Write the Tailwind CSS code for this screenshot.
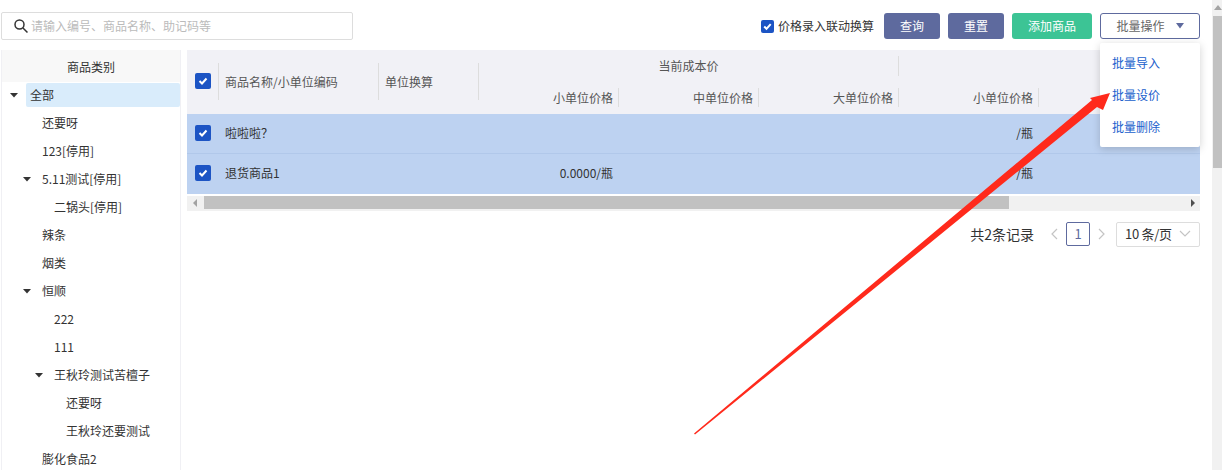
<!DOCTYPE html>
<html lang="zh">
<head>
<meta charset="UTF-8">
<title>批量操作</title>
<script src="https://cdn.jsdelivr.net/npm/@tailwindcss/browser@4"></script>
</head>
<body class="relative w-[1222px] h-[470px] overflow-hidden bg-white text-[12px] text-[#333] font-['Noto_Sans_CJK_SC','Noto_Sans',sans-serif]">
<div class="flex h-full">
  <div class="w-[1212px] h-full">
    <!-- toolbar -->
    <div class="flex items-start h-[50px] pt-[12px] pl-[1px] pr-[12px]">
      <div class="flex items-center w-[352px] h-[28px] border border-[#ddd] rounded-[2px] pl-[11px]">
        <svg width="16" height="16" viewBox="0 0 16 16" fill="none" stroke="#333" stroke-width="1.5"><circle cx="6.5" cy="6.5" r="4.5"/><path d="M10 10l4.5 4.5"/></svg>
        <span class="ml-[2px] text-[#bbb]">请输入编号、商品名称、助记码等</span>
      </div>
      <div class="ml-auto mt-[1px] flex items-center">
        <span class="flex items-center justify-center w-[13px] h-[13px] bg-[#1c54c4] rounded-[2px]">
          <svg width="11" height="11" viewBox="0 0 11 11" fill="none" stroke="#fff" stroke-width="2"><path d="M2.2 5.5l2.3 2.3 4.2-4.6"/></svg>
        </span>
        <span class="ml-[4px] w-[96px] whitespace-nowrap">价格录入联动换算</span>
        <button class="ml-[10px] w-[56px] h-[26px] rounded-[3px] bg-[#5e6a9e] text-white">查询</button>
        <button class="ml-[8px] w-[56px] h-[26px] rounded-[3px] bg-[#5e6a9e] text-white">重置</button>
        <button class="ml-[8px] w-[80px] h-[26px] rounded-[3px] bg-[#3cc495] text-white">添加商品</button>
        <button class="ml-[8px] flex items-center justify-center w-[100px] h-[26px] rounded-[3px] border border-[#5e6a9e] text-[#666] bg-white">
          批量操作
          <svg class="ml-[11px]" width="8" height="6" viewBox="0 0 8 6"><path d="M0 0h8L4 5.5z" fill="#5e6a9e"/></svg>
        </button>
      </div>
    </div>
    <div class="flex h-[420px] pl-[1px] pr-[12px]">
      <!-- category tree -->
      <div class="w-[180px] shrink-0 border-x border-[#f0f0f4]">
        <div class="flex items-center justify-center h-[32px] pt-[2px] bg-[#f8f8f8]">商品类别</div>
        <div class="pt-[1px]">
          <div class="flex items-center h-[24px] mb-[2px] pl-[8px]">
            <svg class="mr-[8px]" width="8" height="5" viewBox="0 0 8 5"><path d="M0 0h8L4 4.5z" fill="#333"/></svg>
            <span class="flex-1 flex items-center h-full pl-[4px] rounded-[2px] bg-[#d9ecfb]">全部</span>
          </div>
          <div class="flex items-center h-[28px] pl-[40px]">还要呀</div>
          <div class="flex items-center h-[28px] pl-[40px]">123[停用]</div>
          <div class="flex items-center h-[28px] pl-[21px]">
            <svg class="mr-[11px]" width="8" height="5" viewBox="0 0 8 5"><path d="M0 0h8L4 4.5z" fill="#333"/></svg>5.11测试[停用]
          </div>
          <div class="flex items-center h-[28px] pl-[52px]">二锅头[停用]</div>
          <div class="flex items-center h-[28px] pl-[40px]">辣条</div>
          <div class="flex items-center h-[28px] pl-[40px]">烟类</div>
          <div class="flex items-center h-[28px] pl-[21px]">
            <svg class="mr-[11px]" width="8" height="5" viewBox="0 0 8 5"><path d="M0 0h8L4 4.5z" fill="#333"/></svg>恒顺
          </div>
          <div class="flex items-center h-[28px] pl-[52px]">222</div>
          <div class="flex items-center h-[28px] pl-[52px]">111</div>
          <div class="flex items-center h-[28px] pl-[33px]">
            <svg class="mr-[11px]" width="8" height="5" viewBox="0 0 8 5"><path d="M0 0h8L4 4.5z" fill="#333"/></svg>王秋玲测试苦檀子
          </div>
          <div class="flex items-center h-[28px] pl-[64px]">还要呀</div>
          <div class="flex items-center h-[28px] pl-[64px]">王秋玲还要测试</div>
          <div class="flex items-center h-[28px] pl-[40px]">膨化食品2</div>
        </div>
      </div>
      <!-- table -->
      <div class="ml-[6px] w-[1013px]">
        <div class="h-[144px] overflow-hidden">
          <div class="flex h-[64px] bg-[#f1f1f6] text-[#555]">
            <div class="flex items-center w-[31px] h-full pb-[2px]">
              <span class="ml-[8px] flex items-center justify-center w-[16px] h-[16px] bg-[#1c54c4] rounded-[2px]">
                <svg width="12" height="12" viewBox="0 0 12 12" fill="none" stroke="#fff" stroke-width="2"><path d="M2.5 6l2.5 2.5 4.5-5"/></svg>
              </span>
            </div>
            <div class="flex items-center w-[160px] h-[37px] mt-[13px] border-l border-[#ddd] pl-[6px]">商品名称/小单位编码</div>
            <div class="flex items-center w-[101px] h-[37px] mt-[13px] border-x border-[#ddd] pl-[6px]">单位换算</div>
            <div class="flex-1 min-w-0">
              <div class="flex h-[32px] pt-[6px]">
                <div class="flex items-center justify-center w-[420px] shrink-0 h-[20px] border-r border-[#ddd]">当前成本价</div>
              </div>
              <div class="flex h-[32px] pt-[6px]">
                <div class="flex items-center justify-end w-[140px] h-[19px] pr-[5px] border-r border-[#ddd]">小单位价格</div>
                <div class="flex items-center justify-end w-[140px] h-[19px] pr-[5px] border-r border-[#ddd]">中单位价格</div>
                <div class="flex items-center justify-end w-[140px] h-[19px] pr-[5px] border-r border-[#ddd]">大单位价格</div>
                <div class="flex items-center justify-end w-[140px] h-[19px] pr-[5px] border-r border-[#ddd]">小单位价格</div>
              </div>
            </div>
          </div>
          <div class="flex items-center h-[40px] pb-[1px] bg-[#bdd2f1] border-b border-[#b1c8ea]">
            <span class="ml-[8px] flex items-center justify-center w-[16px] h-[16px] bg-[#1c54c4] rounded-[2px]">
              <svg width="12" height="12" viewBox="0 0 12 12" fill="none" stroke="#fff" stroke-width="2"><path d="M2.5 6l2.5 2.5 4.5-5"/></svg>
            </span>
            <span class="ml-[14px] w-[254px]">啦啦啦？</span>
            <span class="w-[140px]"></span>
            <span class="w-[420px] pr-[6px] text-right">/瓶</span>
          </div>
          <div class="flex items-center h-[40px] pb-[2px] bg-[#bdd2f1]">
            <span class="ml-[8px] flex items-center justify-center w-[16px] h-[16px] bg-[#1c54c4] rounded-[2px]">
              <svg width="12" height="12" viewBox="0 0 12 12" fill="none" stroke="#fff" stroke-width="2"><path d="M2.5 6l2.5 2.5 4.5-5"/></svg>
            </span>
            <span class="ml-[14px] w-[254px]">退货商品1</span>
            <span class="w-[140px] pr-[6px] text-right">0.0000/瓶</span>
            <span class="w-[420px] pr-[6px] text-right">/瓶</span>
          </div>
        </div>
        <!-- horizontal scrollbar -->
        <div class="flex items-start h-[15px] mt-[2px] bg-[#f1f1f1]">
          <svg class="ml-[6px] mt-[3px] shrink-0" width="5" height="8" viewBox="0 0 5 8"><path d="M4 0v8L0 4z" fill="#a3a3a3"/></svg>
          <div class="ml-[6px] w-[805px] h-[13px] bg-[#c1c1c1]"></div>
          <svg class="ml-auto mt-[3px] mr-[5px] shrink-0" width="5" height="8" viewBox="0 0 5 8"><path d="M1 0v8l4-4z" fill="#505050"/></svg>
        </div>
        <!-- pagination -->
        <div class="flex items-center justify-end h-[24px] mt-[11px]">
          <span class="text-[14px]">共2条记录</span>
          <svg class="ml-[16px]" width="8" height="12" viewBox="0 0 8 12" fill="none" stroke="#c4c4c4" stroke-width="1.2"><path d="M7 1L2 6l5 5"/></svg>
          <span class="ml-[8px] flex items-center justify-center w-[24px] h-[24px] border border-[#5e6a9e] rounded-[2px] text-[#5e6a9e] text-[13px]">1</span>
          <svg class="ml-[8px]" width="8" height="12" viewBox="0 0 8 12" fill="none" stroke="#c4c4c4" stroke-width="1.2"><path d="M1 1l5 5-5 5"/></svg>
          <div class="ml-[10px] flex items-center w-[84px] h-[25px] pl-[8px] border border-[#ddd] rounded-[2px] text-[13px] tracking-[-0.3px]">
            10 条/页
            <svg class="ml-[7px]" width="12" height="8" viewBox="0 0 12 8" fill="none" stroke="#c4c4c4" stroke-width="1.2"><path d="M1 1l5 5 5-5"/></svg>
          </div>
        </div>
      </div>
    </div>
  </div>
  <!-- page scrollbar -->
  <div class="w-[10px] h-full pt-[5px] bg-[#f1f1f1]">
    <svg class="ml-[2px]" width="8" height="5" viewBox="0 0 8 5"><path d="M0 5h8L4 0z" fill="#a3a3a3"/></svg>
    <div class="mt-[6px] ml-[1px] w-[9px] h-[152px] bg-[#c1c1c1]"></div>
  </div>
</div>
<!-- dropdown menu -->
<div class="absolute left-[1100px] top-[43px] w-[100px] h-[104px] py-[4px] bg-white rounded-[2px] shadow-[0_2px_8px_rgba(0,0,0,0.18)] text-[#2060cc]">
  <div class="flex items-center h-[32px] pl-[12px]">批量导入</div>
  <div class="flex items-center h-[32px] pl-[12px]">批量设价</div>
  <div class="flex items-center h-[32px] pl-[12px]">批量删除</div>
</div>
<!-- red annotation arrow -->
<svg class="absolute left-0 top-0" width="1222" height="470" viewBox="0 0 1222 470">
  <polygon points="694,433.5 1092,100 1090,98 1110,93 1103,110 1097,107 695,434.5" fill="#ff2a1c"/>
</svg>
</body>
</html>
